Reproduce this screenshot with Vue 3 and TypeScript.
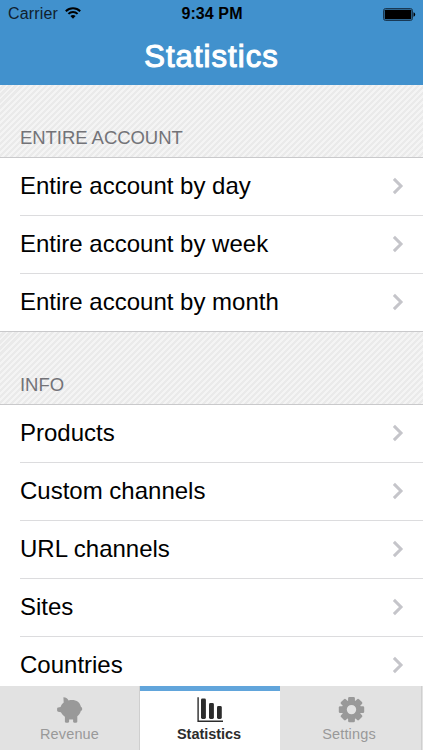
<script setup lang="ts">
interface Section {
  title: string
  rows: string[]
}

const sections: Section[] = [
  {
    title: 'ENTIRE ACCOUNT',
    rows: ['Entire account by day', 'Entire account by week', 'Entire account by month'],
  },
  {
    title: 'INFO',
    rows: ['Products', 'Custom channels', 'URL channels', 'Sites', 'Countries'],
  },
]

const teeth: number[] = [0, 45, 90, 135, 180, 225, 270, 315]
</script>

<template>
  <div class="screen">
    <header class="top">
      <div class="status">
        <div class="carrier">
          <span>Carrier</span>
          <svg class="wifi" width="16" height="12" viewBox="0 0 16 12">
            <path d="M.8 4.2a10.2 10.2 0 0 1 14.4 0" />
            <path d="M3.4 6.9a6.6 6.6 0 0 1 9.2 0" />
            <path class="dot" d="M5.4 9.1a3.9 3.9 0 0 1 5.2 0L8 11.8z" />
          </svg>
        </div>
        <span class="time">9:34 PM</span>
        <div class="power">
          <svg width="33" height="13" viewBox="0 0 33 13">
            <rect class="shell" x=".6" y=".6" width="28.8" height="11.8" rx="1.8" />
            <rect x="1.7" y="1.7" width="26.6" height="9.6" rx=".6" />
            <path d="M30.5 4.2q1.7.4 1.7 2.3t-1.7 2.3z" />
          </svg>
        </div>
      </div>
      <h1>Statistics</h1>
    </header>

    <main class="list">
      <section v-for="section in sections" :key="section.title">
        <h2>{{ section.title }}</h2>
        <ul>
          <li v-for="row in section.rows" :key="row">
            <span>{{ row }}</span>
            <svg class="chevron" width="12" height="18" viewBox="0 0 12 18">
              <path d="M1.9 1.9 9 9l-7.1 7.1" />
            </svg>
          </li>
        </ul>
      </section>
    </main>

    <nav class="tabs">
      <div class="tab">
        <svg width="28" height="28" viewBox="0 0 28 28">
          <path d="M7.4 1.2c2.7.2 4.5 1.4 5.1 3.2 1-.3 2.1-.4 3.3-.4 5 0 8.3 2.6 9.2 7 .8.1 1.2.9 1.2 1.9s-.5 1.8-1.3 1.9c-.6 2.4-2 4.2-3.6 5.4v5.4c0 .7-.4 1.1-1.1 1.1h-2c-.7 0-1.1-.4-1.1-1.1v-2.2h-4v2.2c0 .7-.4 1.1-1.1 1.1h-2c-.7 0-1.1-.4-1.1-1.1v-4.9c-1.7-1.1-3-2.7-4-4.5l-2.8-.4c-.6-.1-1-.5-1-1.2v-1.9c0-.7.3-1.1 1-1.2l2.5-.4c.5-1.7 1.6-3.4 3.1-4.6z" />
        </svg>
        <span>Revenue</span>
      </div>
      <div class="tab active">
        <svg width="28" height="28" viewBox="0 0 28 28">
          <path d="M1.4 1.2h1.4v23.4h24.2V26H1.4z" />
          <rect x="5" y="2.6" width="4.9" height="20.4" rx="1.4" />
          <rect x="13" y="7" width="4.9" height="16" rx="1.4" />
          <rect x="21" y="10" width="4.8" height="13" rx="1.4" />
        </svg>
        <span>Statistics</span>
      </div>
      <div class="tab">
        <svg width="28" height="28" viewBox="0 0 28 28">
          <circle class="ring" cx="14.5" cy="13.6" r="7.2" />
          <rect
            v-for="angle in teeth"
            :key="angle"
            x="11.1"
            y=".9"
            width="6.8"
            height="6"
            rx="1.3"
            :transform="`rotate(${angle} 14.5 13.6)`"
          />
        </svg>
        <span>Settings</span>
      </div>
      <div class="edge"></div>
    </nav>
  </div>
</template>

<style>
body {
  margin: 0;
  overflow: hidden;
}
</style>

<style scoped>
.screen {
  display: flex;
  flex-direction: column;
  width: 423px;
  height: 750px;
  overflow: hidden;
  background: #fff;
  color: #000;
  font-family: "Liberation Sans", Arial, sans-serif;
}
.top {
  flex: none;
  box-sizing: border-box;
  height: 85px;
  background: #4191cd;
}
.status {
  display: grid;
  grid-template-columns: 1fr auto 1fr;
  align-items: center;
  height: 28px;
  padding: 0 7px 0 8px;
  font-size: 16px;
  line-height: 28px;
}
.carrier {
  display: flex;
  align-items: center;
  gap: 7px;
  color: #10202d;
  letter-spacing: .15px;
}
.wifi {
  margin-top: -2px;
  fill: none;
  stroke: #000;
  stroke-width: 2;
}
.wifi .dot {
  fill: #000;
  stroke: none;
}
.time {
  font-weight: 700;
  letter-spacing: .1px;
}
.power {
  display: flex;
  justify-content: flex-end;
}
.shell {
  fill: none;
  stroke: #153047;
  stroke-width: 1;
}
h1 {
  margin: 0;
  color: #fff;
  font-size: 31px;
  font-weight: 400;
  line-height: 57px;
  letter-spacing: 1.05px;
  text-align: center;
  -webkit-text-stroke: 1.1px #fff;
}
.list {
  flex: 1;
  min-height: 0;
  overflow: hidden;
}
h2 {
  box-sizing: border-box;
  height: 73px;
  margin: 0;
  padding: 42px 20px 0;
  border-bottom: 1px solid #c9c9cb;
  background: repeating-linear-gradient(135deg, #f4f4f4 0 2.12px, #eaeaea 2.12px 4.243px);
  color: #737378;
  font-size: 18.5px;
  font-weight: 400;
  line-height: 22px;
  letter-spacing: -.05px;
}
section + section h2 {
  height: 74px;
  border-top: 1px solid #c9c9cb;
}
ul {
  margin: 0;
  padding: 0;
  list-style: none;
}
li {
  box-sizing: border-box;
  display: flex;
  align-items: center;
  justify-content: space-between;
  height: 58px;
  margin-left: 20px;
  padding: 0 19px 1px 0;
  border-bottom: 1px solid #dcdcde;
  font-size: 24px;
  line-height: 54px;
}
li:last-child {
  height: 57px;
  border-bottom: 0;
}
.chevron {
  fill: none;
  stroke: #c5c5ca;
  stroke-width: 3;
}
.tabs {
  flex: none;
  display: grid;
  grid-template-columns: 140px 140px 142px 1px;
  height: 64px;
  background: #e2e2e2;
}
.tab {
  box-sizing: border-box;
  display: flex;
  flex-direction: column;
  align-items: center;
  padding-top: 10px;
  border-right: 1px solid #cfcfcf;
  color: #999;
  fill: #999;
  font-size: 14.5px;
  line-height: 18px;
  letter-spacing: .15px;
}
.tab span {
  margin-top: 1px;
}
.tab:nth-child(3) span {
  margin-right: 3px;
}
.tab.active {
  padding-top: 5px;
  border-top: 5px solid #61a5db;
  border-right: 0;
  background: #fff;
  color: #2c2c2c;
  fill: #2c2c2c;
  font-weight: 700;
  letter-spacing: -.05px;
}
.tab.active span {
  margin-right: 2px;
}
.ring {
  fill: none;
  stroke: #999;
  stroke-width: 5;
}
</style>
